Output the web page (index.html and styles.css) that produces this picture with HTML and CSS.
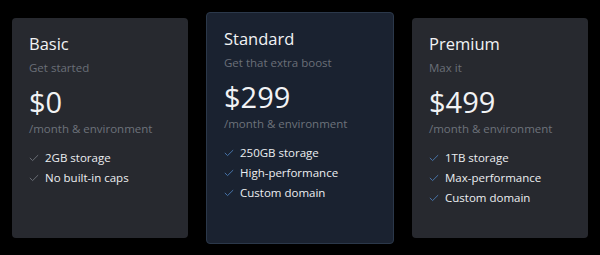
FILE: index.html
```html
<!DOCTYPE html>
<html lang="en">
<head>
    <meta charset="UTF-8">
    <title>Pricing</title>
    <link rel="stylesheet" href="styles.css">
</head>
<body>
    <div class="plans">
        <!-- Basic -->
        <div class="plan">
            <h2 class="plan-name">Basic</h2>
            <p class="plan-tagline">Get started</p>
            <div class="plan-price">$0</div>
            <p class="plan-period">/month &amp; environment</p>
            <ul class="features">
                <li><svg class="check" viewBox="0 0 12 9"><path d="M1 4.4 L4.3 7.6 L11 1"/></svg>2GB storage</li>
                <li><svg class="check" viewBox="0 0 12 9"><path d="M1 4.4 L4.3 7.6 L11 1"/></svg>No built-in caps</li>
            </ul>
        </div>

        <!-- Standard -->
        <div class="plan featured">
            <h2 class="plan-name">Standard</h2>
            <p class="plan-tagline">Get that extra boost</p>
            <div class="plan-price">$299</div>
            <p class="plan-period">/month &amp; environment</p>
            <ul class="features">
                <li><svg class="check" viewBox="0 0 12 9"><path d="M1 4.4 L4.3 7.6 L11 1"/></svg>250GB storage</li>
                <li><svg class="check" viewBox="0 0 12 9"><path d="M1 4.4 L4.3 7.6 L11 1"/></svg>High-performance</li>
                <li><svg class="check" viewBox="0 0 12 9"><path d="M1 4.4 L4.3 7.6 L11 1"/></svg>Custom domain</li>
            </ul>
        </div>

        <!-- Premium -->
        <div class="plan blue-checks">
            <h2 class="plan-name">Premium</h2>
            <p class="plan-tagline">Max it</p>
            <div class="plan-price">$499</div>
            <p class="plan-period">/month &amp; environment</p>
            <ul class="features">
                <li><svg class="check" viewBox="0 0 12 9"><path d="M1 4.4 L4.3 7.6 L11 1"/></svg>1TB storage</li>
                <li><svg class="check" viewBox="0 0 12 9"><path d="M1 4.4 L4.3 7.6 L11 1"/></svg>Max-performance</li>
                <li><svg class="check" viewBox="0 0 12 9"><path d="M1 4.4 L4.3 7.6 L11 1"/></svg>Custom domain</li>
            </ul>
        </div>
    </div>
</body>
</html>
```

FILE: styles.css
```css
body {
    margin: 0;
    width: 600px;
    height: 255px;
    background: #000;
    font-family: 'Open Sans', 'Noto Sans', sans-serif;
    color: #f2f3f5;
    overflow: hidden;
}

.plans {
    display: flex;
    align-items: center;
    gap: 18px;
    height: 255px;
    padding: 0 12px;
    box-sizing: border-box;
}

.plan {
    width: 176px;
    height: 220px;
    box-sizing: border-box;
    padding: 15px 17px 0;
    background: #27292f;
    border-radius: 4px;
}

.plan.featured {
    width: 188px;
    height: 232px;
    padding: 15px 17px 0;
    background: #1a2230;
    border: 1px solid #2b384a;
}

.plan-name {
    margin: 0;
    font-size: 16.5px;
    font-weight: 400;
    line-height: 22px;
}

.plan-tagline {
    margin: 3px 0 0;
    font-size: 11.5px;
    line-height: 20px;
    color: #6a6f78;
}

.plan-price {
    margin-top: 7px;
    font-size: 29px;
    line-height: 34px;
}

.plan-period {
    margin: 0;
    font-size: 11.5px;
    line-height: 20px;
    color: #6d727b;
}

.features {
    list-style: none;
    margin: 9px 0 0;
    padding: 0;
}

.features li {
    display: flex;
    align-items: center;
    font-size: 11.5px;
    line-height: 20px;
    color: #eceef1;
}

.check {
    width: 10px;
    height: 8px;
    margin-right: 6px;
    fill: none;
    stroke: #6e737b;
    stroke-width: 1.1;
}

.featured .check,
.blue-checks .check {
    stroke: #4b7bb3;
}
```
